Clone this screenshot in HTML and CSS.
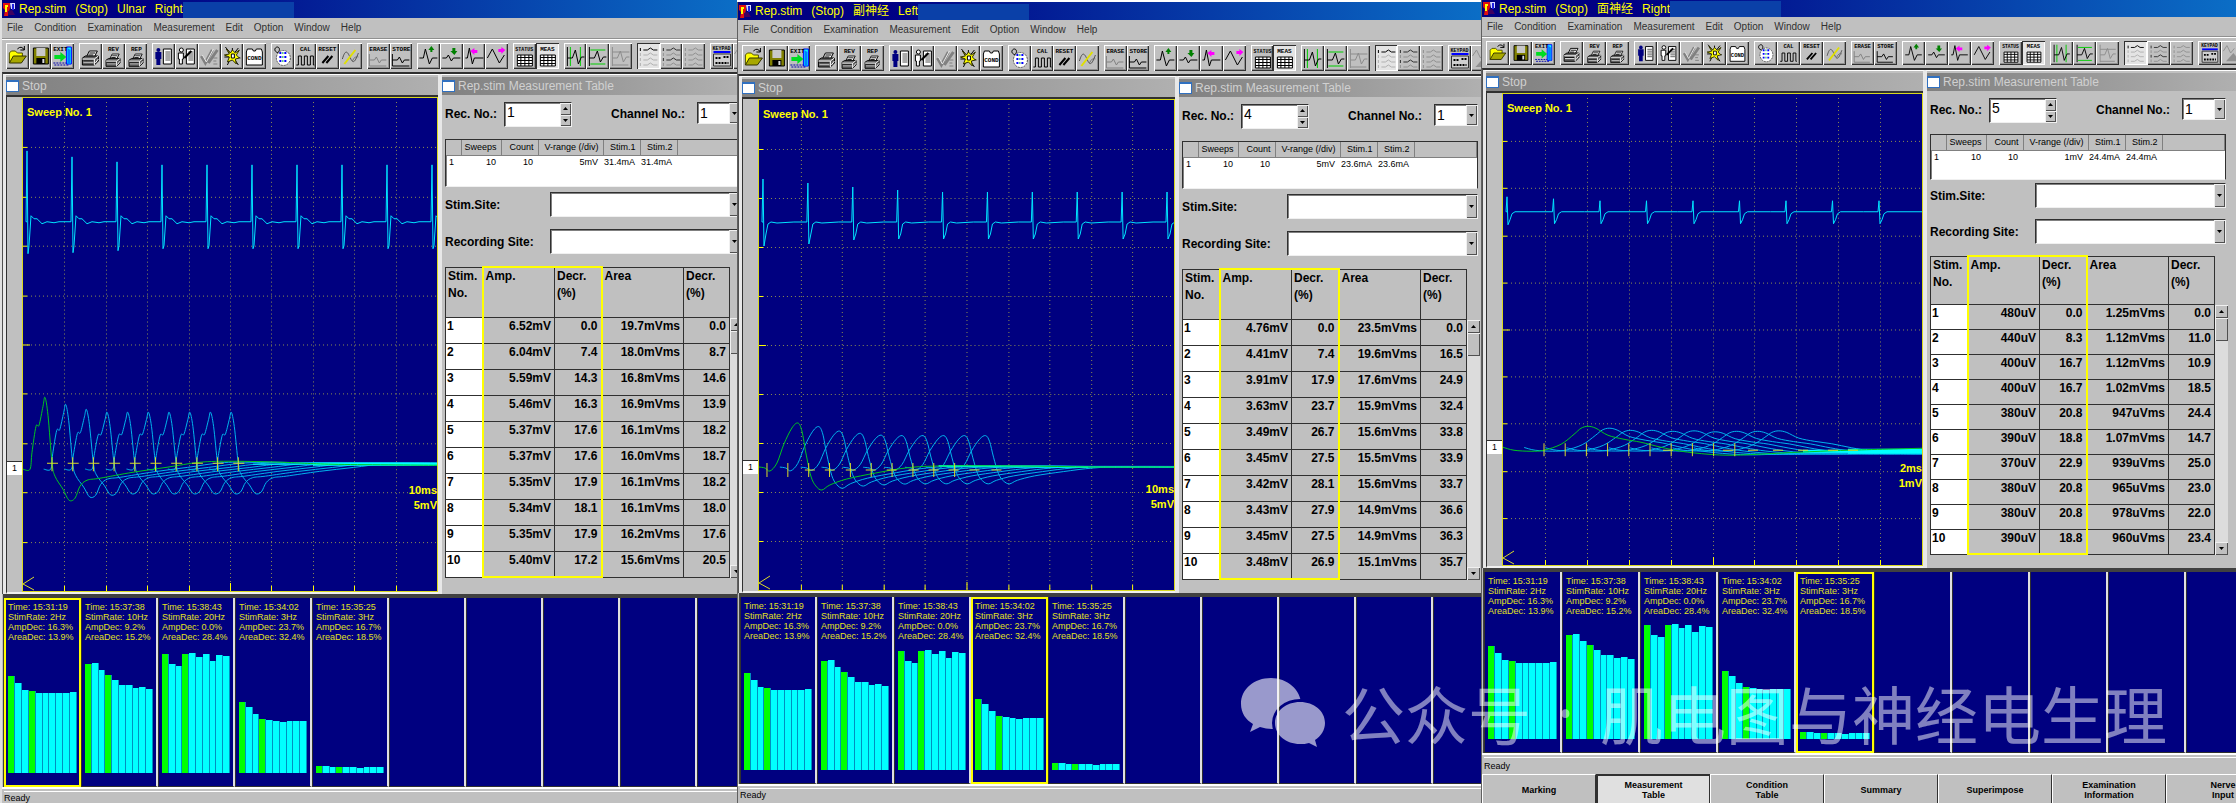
FILE: index.html
```html
<!DOCTYPE html>
<html lang="en">
<head>
    <meta charset="UTF-8">
    <meta name="viewport" content="width=device-width, initial-scale=1.0">
    <title>Rep.stim</title>
    <link rel="stylesheet" href="styles.css">
</head>
<body>
    <main class="screens" id="screens"></main>
    <div class="watermark">
        <svg class="watermark-logo" viewBox="0 0 86 70" aria-hidden="true">
            <mask id="cut">
                <rect width="86" height="70" fill="#fff"/>
                <ellipse cx="60" cy="46" rx="28" ry="24" fill="#000"/>
                <ellipse cx="21" cy="18" rx="4" ry="4"/>
                <ellipse cx="41" cy="18" rx="4" ry="4"/>
            </mask>
            <mask id="eyes">
                <rect width="86" height="70" fill="#fff"/>
                <ellipse cx="51" cy="39" rx="4" ry="4"/>
                <ellipse cx="68" cy="39" rx="4" ry="4"/>
            </mask>
            <path mask="url(#cut)" d="M31 1C14 1 1 12 1 27c0 9 5 16 12 20l-3 8 10-5c4 1 8 2 12 2 16 0 29-11 29-25S47 1 31 1z"/>
            <path mask="url(#eyes)" d="M60 25c-14 0-25 9-25 21s11 21 25 21c3 0 6 0 9-1l8 4-2-7c6-4 10-10 10-17 0-12-11-21-25-21z"/>
        </svg>
        <span>公众号</span><span class="dot">·</span><span>肌电图与神经电生理</span>
    </div>
    <script src="script.js"></script>
</body>
</html>
```
FILE: styles.css
```css
* {
    box-sizing: border-box;
}
body {
    margin: 0;
    background-color: #fff;
    font-family: "Liberation Sans", "Noto Sans CJK SC", Arial, sans-serif;
    font-size: 12px;
    color: #000;
    overflow: hidden;
}
button, input, select {
    font-family: inherit;
    border: none;
    border-radius: 0;
    padding: 0;
    margin: 0;
    color: #000;
}
.screens {
    display: grid;
    grid-template-columns: 737fr 744fr 755fr;
    height: 100vh;
    overflow: hidden;
}
.window {
    --title: 18px;
    --menu: 21px;
    --tools: 33px;
    --plot: 496px;
    --panel: 297px;
    --tail: 27px;
    --pitch: 77px;
    --cards: 189px;
    --row: 26px;
    --head: 50px;
    --gap: 12px;
    --list: 48px;
    --list-gap: 5px;
    min-width: 0;
    overflow: hidden;
    background-color: #c0c0c0;
    border-left: 2px solid #e0e0e0;
}
.window.left {
    --plot: 493px;
    --panel: 304px;
    --tail: 33px;
    --cards: 187px;
    margin-top: 2px;
    border-left: 1px solid #606060;
}
.window.face {
    --title: 17px;
    --menu: 20px;
    --tools: 31px;
    --plot: 474px;
    --panel: 311px;
    --tail: 38px;
    --pitch: 78px;
    --cards: 181px;
    --row: 25px;
    --head: 48px;
    --gap: 11px;
    --list: 46px;
    --list-gap: 3px;
    border-left: 1px solid #606060;
}

/* caption */
.caption {
    display: flex;
    align-items: center;
    height: var(--title);
    gap: 3px;
    padding-left: 1px;
    background: linear-gradient(to right, #000080, #000084 20%, #0b6ec6);
    color: #ff0;
}
.caption h1 {
    display: flex;
    gap: 9px;
    margin: 0;
    font-size: 12px;
    line-height: 16px;
    font-weight: normal;
    white-space: nowrap;
}
.caption svg {
    width: 13px;
    height: 15px;
}
.caption .cover {
    width: 111px;
    align-self: flex-end;
    height: 16px;
    margin-left: -3px;
    background-color: #0a40a8;
}

/* menu */
.menu {
    display: flex;
    align-items: center;
    gap: 11px;
    height: var(--menu);
    padding-left: 5px;
    border-bottom: 1px solid #909090;
}
.menu a {
    color: #303030;
    font-size: 10px;
    line-height: 18px;
    text-decoration: none;
}

/* toolbar */
.toolbar {
    display: flex;
    gap: 5px;
    height: var(--tools);
    padding: 3px 0 3px 4px;
    border-top: 1px solid #fff;
    overflow: hidden;
}
.tools {
    display: flex;
    flex: 1;
    gap: 5px;
}
.tool-group {
    display: flex;
}
.tool-group.tail {
    flex: 0 0 var(--tail);
    overflow: hidden;
}
.tool {
    flex: 1;
    min-width: 0;
    background-color: #c0c0c0;
    box-shadow: inset 1px 1px #fff, inset -1px -1px #303030, inset -2px -2px #909090;
}
.tail .tool {
    flex: 0 0 23px;
}
.tool.pressed {
    background-color: #e4e4e4;
    box-shadow: inset 1px 1px #303030, inset -1px -1px #fff;
}
.tool svg {
    display: block;
    width: 100%;
    height: 100%;
}
.tool text {
    font-family: "Liberation Mono", monospace;
    font-weight: bold;
    font-size: 6px;
    text-anchor: middle;
}
.tool text.long {
    font-size: 5px;
}

/* workspace */
.desk {
    display: flex;
    border-top: 2px solid #303030;
    border-left: 1px solid #505050;
}
.sub {
    padding-top: 2px;
    border-top: 1px solid #fff;
    border-left: 2px solid #e8e8e8;
}
.sub h2 {
    display: flex;
    align-items: center;
    gap: 3px;
    height: 18px;
    margin: 0;
    background: linear-gradient(to right, #808080, #b0b0b0);
    color: #d0d0d0;
    font-size: 12px;
    font-weight: normal;
    white-space: nowrap;
}
.sub h2 i {
    width: 13px;
    height: 12px;
    background-color: #fff;
    border: 1px solid #3070c0;
    border-top-width: 2px;
}
.scope {
    flex: 1;
    min-width: 0;
    border-left-width: 3px;
    border-right: 2px solid #e8e8e8;
}
.scope-body {
    display: flex;
    height: calc(var(--plot) + 3px);
    border-top: 2px solid #303030;
    border-left: 1px solid #303030;
    border-bottom: 2px solid #f0f0f0;
}
.gutter {
    flex: 0 0 15px;
    padding-top: calc(var(--plot) * 0.733);
}
.gutter span {
    display: block;
    height: 14px;
    background-color: #fff;
    border-top: 1px solid #303030;
    font-size: 9px;
    line-height: 13px;
    text-align: center;
}
.plot {
    position: relative;
    flex: 1;
    min-width: 0;
    background-color: #000080;
    border: 1px solid #d8d820;
    color: #ff0;
    font-size: 11px;
    font-weight: bold;
    line-height: 15px;
}
.plot svg {
    display: block;
    width: 100%;
    height: 100%;
}
.plot .sweep {
    position: absolute;
    left: 4px;
    top: 7px;
}
.plot .scale {
    position: absolute;
    right: 0;
    top: 78%;
    text-align: right;
}
.grid {
    stroke: #8c8c50;
    stroke-dasharray: 1 3;
}
.axis {
    stroke: #ff0;
    stroke-width: 1;
}
.line {
    fill: none;
}
.raw {
    stroke: #00e4ff;
}
.rest {
    stroke: #00b4ec;
}
.first {
    stroke: #00c81e;
}
.band {
    stroke: #0ff;
}
.mark {
    stroke: #dcdc28;
}

/* measurement table */
.panel {
    flex: 0 0 var(--panel);
    overflow: hidden;
}
.form {
    width: 299px;
    padding: 7px 0 0 3px;
}
.form-row {
    display: flex;
    align-items: center;
    justify-content: space-between;
    margin-bottom: var(--gap);
    font-weight: bold;
}
.form-row.first-row {
    align-items: flex-start;
}
.form-row .field {
    display: flex;
    gap: 7px;
}
.field label {
    line-height: 24px;
}
.combo, .spin {
    display: flex;
    height: 25px;
    background-color: #fff;
    border: 1px solid #303030;
    border-right-color: #f0f0f0;
    border-bottom-color: #f0f0f0;
    box-shadow: inset 1px 1px #808080;
}
.combo {
    width: 191px;
}
.combo.small {
    width: 44px;
    height: 22px;
    margin-left: 5px;
}
.spin {
    width: 68px;
}
.combo select {
    flex: 1;
    min-width: 0;
    padding-left: 2px;
    appearance: none;
    background: none;
    font-size: 14px;
}
.spin input {
    flex: 1;
    min-width: 0;
    height: 18px;
    padding-left: 2px;
    background: none;
    font-size: 14px;
}
.combo i, .spin button, .scroll button {
    display: flex;
    align-items: center;
    justify-content: center;
    width: 11px;
    background-color: #c0c0c0;
    box-shadow: inset 1px 1px #f0f0f0, inset -1px -1px #505050;
}
.combo svg, .spin svg, .scroll svg {
    width: 5px;
    height: 3px;
}
.spin div {
    display: grid;
    grid-template-rows: 1fr 1fr;
}
.sweeps {
    height: var(--list);
    margin-bottom: var(--list-gap);
    background-color: #fff;
    border: 1px solid #303030;
    border-bottom-color: #f0f0f0;
    box-shadow: inset 1px 1px #808080;
}
.sweeps table {
    width: 100%;
    table-layout: fixed;
    border-collapse: collapse;
    font-size: 9px;
    line-height: 10px;
}
.sweeps th, .sweeps td {
    height: 15px;
    padding: 0 4px 0 0;
    text-align: right;
    font-weight: normal;
    white-space: nowrap;
}
.sweeps td {
    height: 13px;
    padding-right: 5px;
}
.sweeps th {
    background-color: #c0c0c0;
    border-right: 1px solid #808080;
    border-bottom: 1px solid #808080;
}
.sweeps td:first-child {
    padding: 0 0 0 3px;
    text-align: left;
}
.result {
    display: flex;
    align-items: flex-end;
}
.values {
    width: 284px;
    table-layout: fixed;
    border-collapse: collapse;
    font-weight: bold;
}
.values th, .values td {
    padding: 0 3px 0 2px;
    border: 1px solid #303030;
    line-height: 17px;
    text-align: right;
    vertical-align: top;
}
.values thead th {
    height: var(--head);
    text-align: left;
}
.values tbody tr {
    height: var(--row);
}
.values tbody th {
    padding-left: 1px;
    background-color: #fff;
    text-align: left;
}
.values .amp {
    border-left: 2px solid #ff0;
}
.values .decr {
    border-right: 2px solid #ff0;
}
.values thead .amp, .values thead .decr {
    border-top: 2px solid #ff0;
}
.values tbody tr:last-child .amp, .values tbody tr:last-child .decr {
    border-bottom: 2px solid #ff0;
}
.scroll {
    display: flex;
    flex-direction: column;
    width: 13px;
    height: calc(var(--row) * 10);
    background-color: #dcdcdc;
}
.scroll button {
    width: 13px;
    height: 13px;
}
.scroll .thumb {
    height: 23px;
    margin-bottom: auto;
}

/* record strip */
.strip {
    display: flex;
    margin-left: 1px;
    border-top: 4px solid #404040;
    border-left: 1px solid #404040;
    overflow: hidden;
    background-color: #000080;
}
.card {
    display: flex;
    flex: 0 0 var(--pitch);
    flex-direction: column;
    justify-content: space-between;
    height: var(--cards);
    padding: 4px 3px 13px;
    border-left: 1px solid #303030;
    border-right: 2px solid #e0e0e0;
    border-bottom: 1px solid #303030;
    color: #e0e020;
    font-size: 9px;
    line-height: 10px;
    white-space: nowrap;
}
.card.active {
    padding: 2px 2px 12px;
    border: 2px solid #ff0;
}
.card p {
    margin: 0;
}
.bars {
    display: flex;
    align-items: flex-end;
}
.bars i {
    flex: 1;
    background-color: #0ff;
    border-right: 1px solid #0090c0;
}
.bars i:nth-child(1), .bars i:nth-child(4) {
    background-color: #0f0;
}
.status {
    height: 21px;
    padding: 2px 0 0 2px;
    border-top: 2px solid #fff;
    font-size: 9px;
    line-height: 11px;
}
.status p {
    margin: 0;
    padding-top: 1px;
    border-top: 1px solid #fff;
}
.face .status p {
    padding-top: 3px;
}
.tabs {
    display: flex;
}
.tabs button {
    flex: 0 0 114px;
    height: 30px;
    background-color: #c0c0c0;
    border-top: 1px solid #fff;
    border-left: 1px solid #fff;
    border-right: 1px solid #303030;
    font-size: 9px;
    font-weight: bold;
    line-height: 10px;
    white-space: pre-line;
}
.tabs button.active {
    background-color: #e0e0e0;
    border-top: 2px solid #303030;
    border-left: 2px solid #303030;
}

/* channel name over the screens */
.watermark {
    position: absolute;
    left: 1240px;
    top: 666px;
    display: flex;
    align-items: center;
    color: rgba(255, 255, 255, 0.5);
    font-family: "Noto Sans CJK SC", sans-serif;
    font-size: 63px;
    line-height: 92px;
    white-space: nowrap;
    pointer-events: none;
}
.watermark-logo {
    width: 86px;
    height: 70px;
    margin-right: 16px;
    fill: rgba(255, 255, 255, 0.6);
}
.watermark .dot {
    padding: 0 26px;
    font-family: "Noto Sans", sans-serif;
}
```
FILE: script.js
```js
// ---- toolbar icons, drawn on a 22 x 26 button ----
const printer = '<path d="M7 14l3-6h8l-3 6z" fill="#fff" stroke="#000"/><path d="M9 12h5M10 10h6" stroke="#000"/><path d="M3 15l3-2h13v5l-4 4H3z" fill="#606060" stroke="#000"/><path d="M3 16h12v6M4 19h10M15 16l4-3M16 20l3-4" stroke="#fff" fill="none"/><path d="M4 18h10" stroke="#000"/>';
const smallPrinter = `<g transform="translate(1 4) scale(0.88)">${printer}</g>`;
const page = '<path d="M11 6h8v15h-8z" fill="#fff" stroke="#000"/><path d="M13 9h5M13 11h5M13 13h5M13 15h5M13 17h5" stroke="#555"/>';
const gridBox = '<path d="M4 12h15v11H4z" fill="#fff" stroke="#000"/><path d="M4 14.500h15M4 17.500h15M4 20.500h15M7.500 12v11M11.500 12v11M15.500 12v11" stroke="#000"/>';
const label = (text, y = 8) => `<text x="11" y="${y}"${text.length > 5 ? ' class="long"' : ''}>${text}</text>`;
const stroke = (d, color = '#000', width = 1) => `<path d="${d}" fill="none" stroke="${color}" stroke-width="${width}"/>`;
const sheetWaves = (a, b) => [6, 11, 16, 21].map((y, i) =>
    stroke(`M3 ${y - 1}v3M6 ${y + 1}h4l3-2 3 2h4`, i % 2 ? b : a)).join('');

const icons = {
    Open: '<path d="M3 20V10l2-2h4l2 2h5v3" fill="#ff0" stroke="#505000"/><path d="M3 20l4-7h13l-5 7z" fill="#a8a800" stroke="#303000"/>' + stroke('M11 6q4-4 7 1M18 3v4h-4'),
    Save: '<path d="M4 5h15v16H4z" fill="#808000" stroke="#000"/><path d="M7 5h9v8H7z" fill="#c8c8c8"/><path d="M7 15h9v6H7z" fill="#000"/><path d="M13 16h2v4h-2z" fill="#ddd"/>',
    Exit: '<path d="M15 4h5v17h-5z" fill="#0ff" stroke="#00f"/><path d="M16 5l3 2v15l-3-2z" fill="#0080ff"/><path d="M3 12h6V9l6 5-6 5v-3H3z" fill="#0d2"/><path d="M2 20h13M3 22h15" stroke="#00a" stroke-dasharray="2 1"/><text x="9" y="8">EXIT</text>',
    Print: printer,
    'Print review': label('REV') + smallPrinter,
    'Print report': label('REP') + smallPrinter,
    Patient: '<circle cx="6" cy="7" r="2" fill="#000080"/><path d="M3 9h6v7H8v6H4v-6H3z" fill="#000080"/>' + page,
    'Edit patient': '<circle cx="6" cy="7" r="2" fill="#fff" stroke="#000"/><path d="M3 10h5v6H7v5H4v-5H3z" fill="#fff" stroke="#000"/>' + page + stroke('M9 15l7-7', '#000', 2),
    Check: stroke('M3 13l4 7 7-13M10 20l9-13', '#808080', 3) + stroke('M4 12l4 7 7-13', '#e8e8e8') + stroke('M15 15h4M15 18h3M15 21h4', '#808080'),
    Neuron: stroke('M4 4l5 6M17 5l-4 5M3 14h5M19 15l-5-1M6 22l3-6M17 22l-4-6M11 5v4') + '<path d="M5 6l4 4 2-3 3 3 4-3-3 5 3 3-4 1 1 5-4-4-5 2 2-5-5-2 5-1z" fill="#ff0" stroke="#303000"/><path d="M10 11h3v4h-3z" fill="#fff" stroke="#000"/>',
    Conditions: '<path d="M3 9l1-3h5l1 2h2l1-2h5l1 3v13H3z" fill="#fff" stroke="#000"/>' + label('COND', 17),
    Stimulator: stroke('M5 9c-3-2-1-5 1-5s3 3 1 5M5 9l5 3') + '<ellipse cx="12" cy="15" rx="7" ry="7.500" fill="#fff" stroke="#555" stroke-dasharray="2 1"/>' + '<path d="M9 9v12M14 9v12" stroke="#00f" stroke-width="2" stroke-dasharray="2 2"/><path d="M11.500 9v12" stroke="#0a4" stroke-dasharray="2 2"/>',
    Calibrate: label('CAL') + stroke('M2 22h2v-9h3v9h3v-9h3v9h3v-9h3v9h1'),
    Reset: label('RESET') + stroke('M6 20l6-7M10 20l6-7', '#000', 2),
    Filter: stroke('M3 16c3-10 5-8 8-1s5 3 8-5', '#505050') + stroke('M5 21L16 7', '#e0e000', 2) + stroke('M13 18q3-6 6-4', '#707070'),
    Erase: label('ERASE') + stroke('M2 11v12h17M2 17h5l2-3 3 6 2-3h5', '#808080'),
    Store: label('STORE') + stroke('M2 11v12h17M2 17h5l2-3 3 6 2-3h5'),
    'Gain up': stroke('M2 15h4l2-9 4 15 3-6h5') + '<path d="M13 9V7h-2l3-4 3 4h-2v2z" fill="#008000"/>',
    'Gain down': stroke('M2 15h4l2-3 3 6 2-3h7') + '<path d="M12 5h3v3h2l-3 4-4-4h2z" fill="#008000"/>',
    'Sweep faster': stroke('M2 15h2l2-10 3 16 2-6h9') + '<path d="M7 8l4-3v2h3v3h-3v2z" fill="#f0f"/>',
    'Sweep slower': stroke('M2 15l5-9 7 14 5-8') + '<path d="M20 7l-4-3v2h-3v3h3v2z" fill="#f0f"/>',
    Status: label('STATUS') + gridBox,
    Measure: label('MEAS') + gridBox,
    'Latency cursor': stroke('M6 4v19M16 4v19', '#0c0') + stroke('M3 4v19M3 15h5l3-8 3 14 3-7h3'),
    'Amplitude cursor': stroke('M4 7h15M4 21h15', '#0c0') + stroke('M3 4v19M3 15h5l3-7 3 11 3-5h3'),
    'No cursor': stroke('M3 4v19M3 9h17M3 15h5l3-7 3 11 3-5h3M3 22h16', '#8c8c8c'),
    'Channel one': stroke('M3 5v3M6 7h4l3-2 3 2h4') + sheetWaves('#b0b0b0', '#b0b0b0').replace(/^<path[^>]*>/, ''),
    'Channel pairs': sheetWaves('#303030', '#909090'),
    'Channel all': sheetWaves('#909090', '#909090'),
    Keypad: label('KEYPAD', 7) + '<path d="M3 8h17v2H3z" fill="#00f"/><path d="M3 11h17v12H3z" fill="#d0d0d0" stroke="#303030"/><path d="M5 15h6M13 14h5M5 20h13" stroke="#000" stroke-width="2" stroke-dasharray="2 1"/>',
    Trend: stroke('M1 11l4-6 4 8 4-5', '#909090') + '<path d="M4 22l8-9 7 9z" fill="#909090"/>'
};
const groups = [
    ['Open', 'Save', 'Exit'],
    ['Print', 'Print review', 'Print report'],
    ['Patient', 'Edit patient', 'Check', 'Neuron', 'Conditions'],
    ['Stimulator', 'Calibrate', 'Reset', 'Filter'],
    ['Erase', 'Store'],
    ['Gain up', 'Gain down', 'Sweep faster', 'Sweep slower'],
    ['Status', 'Measure'],
    ['Latency cursor', 'Amplitude cursor', 'No cursor'],
    ['Channel one', 'Channel pairs', 'Channel all']
];
const pressed = ['Measure', 'Channel one'];
const menus = ['File', 'Condition', 'Examination', 'Measurement', 'Edit', 'Option', 'Window', 'Help'];

// ---- stored records, shared by all the windows ----
const records = [
    { time: '15:31:19', rate: '2Hz', amp: '16.3%', area: '13.9%', bars: [97, 90, 83, 82, 80, 80, 80, 80, 80, 81] },
    { time: '15:37:38', rate: '10Hz', amp: '9.2%', area: '15.2%', bars: [109, 110, 103, 98, 93, 88, 88, 85, 86, 84] },
    { time: '15:38:43', rate: '20Hz', amp: '0.0%', area: '28.4%', bars: [119, 109, 107, 119, 120, 116, 119, 112, 118, 117] },
    { time: '15:34:02', rate: '3Hz', amp: '23.7%', area: '32.4%', bars: [71, 66, 59, 54, 53, 52, 51, 52, 52, 52] },
    { time: '15:35:25', rate: '3Hz', amp: '16.7%', area: '18.5%', bars: [7, 7, 6, 6, 6, 6, 5, 6, 6, 6] }
];

const windows = [
    {
        cls: 'ulnar', nerve: 'Ulnar', side: 'Right', rec: 1, active: 0, range: '5mV', stim: '31.4mA', time: '10ms', zoom: 1,
        size: [414, 494],
        train: { base: 124, x: 4, step: 45, tops: [53, 59, 64, 67], low: [156, 155, 153, 151], after: [[1, 24], [3, -6], [6, -3], [9, -3], [14, 2], [19, 0], [26, 1], [31, 0]] },
        wave: [[0, 372], [7, 372], [9, 355], [13, 329], [16, 328], [20, 309], [22, 300], [25, 318], [29, 365], [32, 379], [40, 392], [46, 403], [52, 401], [57, 389], [64, 383], [77, 381], [110, 375], [144, 370], [177, 365], [210, 364], [260, 365], [310, 367], [414, 368]],
        base: 371, step: 20.7, scale: [0.9, 0.83, 0.79, 0.79, 0.79, 0.79, 0.79, 0.79, 0.79],
        band: [[230, 367, 300, 367, 1], [290, 367, 414, 367, 3]],
        marks: { x: 29, y: 366, from: 360, to: 374, cross: true },
        rows: ['6.52mV 0.0 19.7mVms 0.0', '6.04mV 7.4 18.0mVms 8.7', '5.59mV 14.3 16.8mVms 14.6', '5.46mV 16.3 16.9mVms 13.9', '5.37mV 17.6 16.1mVms 18.2', '5.37mV 17.6 16.0mVms 18.7', '5.35mV 17.9 16.1mVms 18.2', '5.34mV 18.1 16.1mVms 18.0', '5.35mV 17.9 16.2mVms 17.6', '5.40mV 17.2 15.6mVms 20.5']
    },
    {
        cls: 'left', nerve: '副神经', side: 'Left', rec: 4, active: 3, range: '5mV', stim: '23.6mA', time: '10ms', zoom: 1,
        size: [416, 490],
        train: { base: 122, x: 4, step: 45, tops: [79, 83, 87, 90, 92], low: [146, 144, 140, 139], after: [[2, 12], [4, 2], [7, 0], [13, 1], [30, 0]] },
        wave: [[0, 367], [6, 368], [11, 371], [18, 363], [25, 344], [33, 328], [39, 323], [43, 331], [47, 353], [52, 376], [57, 386], [63, 390], [71, 385], [88, 379], [117, 373], [147, 368], [181, 366], [263, 366], [336, 367], [416, 367]],
        base: 368, step: 20.9, scale: [0.92, 0.82, 0.77, 0.73, 0.72, 0.72, 0.72, 0.72, 0.72],
        band: [[180, 366, 330, 367, 2], [330, 367, 416, 367, 1]],
        marks: { x: 8, y: 370, from: 363, to: 377, lines: [51, 71, 92, 112, 133, 155, 175, 195, 216, 238] },
        rows: ['4.76mV 0.0 23.5mVms 0.0', '4.41mV 7.4 19.6mVms 16.5', '3.91mV 17.9 17.6mVms 24.9', '3.63mV 23.7 15.9mVms 32.4', '3.49mV 26.7 15.6mVms 33.8', '3.45mV 27.5 15.5mVms 33.9', '3.42mV 28.1 15.6mVms 33.7', '3.43mV 27.9 14.9mVms 36.6', '3.45mV 27.5 14.9mVms 36.3', '3.48mV 26.9 15.1mVms 35.7']
    },
    {
        cls: 'face', nerve: '面神经', side: 'Right', rec: 5, active: 4, range: '1mV', stim: '24.4mA', time: '2ms', zoom: 0.955,
        size: [419, 472],
        train: { base: 118, x: 4, step: 46.5, tops: [103, 105, 107], low: [131, 130], after: [[2, 8], [4, 2], [7, 0], [30, 0]] },
        wave: [[0, 354], [11, 357], [28, 358], [41, 357], [58, 351], [71, 341], [78, 335], [85, 333], [93, 335], [105, 342], [121, 346], [138, 349], [158, 354], [178, 358], [205, 361], [228, 362], [255, 361], [295, 359], [345, 357], [419, 355]],
        base: 357, step: 21.2, scale: [0.92, 0.83, 0.83, 0.79, 0.81, 0.77, 0.79, 0.79, 0.81],
        band: [[300, 358, 350, 358, 3], [345, 358, 419, 358, 5]],
        marks: { x: 41, y: 357, from: 350, to: 363, lines: [165, 225, 250, 275, 300, 330, 350] },
        rows: ['480uV 0.0 1.25mVms 0.0', '440uV 8.3 1.12mVms 11.0', '400uV 16.7 1.12mVms 10.9', '400uV 16.7 1.02mVms 18.5', '380uV 20.8 947uVms 24.4', '390uV 18.8 1.07mVms 14.7', '370uV 22.9 939uVms 25.0', '380uV 20.8 965uVms 23.0', '380uV 20.8 978uVms 22.0', '390uV 18.8 960uVms 23.4'],
        tabs: ['Marking', 'Measurement\nTable', 'Condition\nTable', 'Summary', 'Superimpose', 'Examination\nInformation', 'Nerve\nInput']
    }
];

// Curve through the points (Catmull-Rom)
function smooth(p) {
    let d = `M${p[0]}`;
    for (let i = 0; i < p.length - 1; i++) {
        const a = p[i - 1] || p[i], b = p[i], c = p[i + 1], e = p[i + 2] || c;
        d += `C${b[0] + (c[0] - a[0]) / 6} ${b[1] + (c[1] - a[1]) / 6} ${c[0] - (e[0] - b[0]) / 6} ${c[1] - (e[1] - b[1]) / 6} ${c}`;
    }
    return d;
}

const last = (list, i) => list[Math.min(i, list.length - 1)];

function trainPath({ base, x, step, tops, low, after }) {
    let d = `M${x} ${base}`;
    for (let i = 0; i < 10; i++) {
        const x0 = x + i * step;
        d += `L${x0 - 1} ${base}L${x0} ${last(tops, i)}L${x0 + 1} ${last(low, i)}`;
        after.forEach(([dx, dy]) => { d += `L${x0 + 1 + dx} ${base + dy}`; });
    }
    return d;
}

function drawPlot(w) {
    const [wd, ht] = w.size;
    let grid = '', axis = '';
    for (let i = 1; i < 10; i++) {
        const x = Math.round(wd * i / 10) + 0.5, y = Math.round(ht * i / 10) + 0.5;
        grid += `M${x} 4V${ht}M4 ${y}H${wd}`;
        axis += `M${x} ${ht}v${i === 5 ? -8 : -5}M0 ${y}h${i === 5 ? 7 : 4}`;
    }
    const rest = w.scale.map((s, i) => {
        const pts = w.wave.map(([x, y]) => [x + (i + 1) * w.step, w.base + (y - w.base) * s]);
        return `<path class="line rest" d="${smooth(pts)}"/>`;
    }).join('');
    const m = w.marks;
    let marks = '';
    for (let i = 0; i < 10; i++) {
        const x = m.x + i * w.step;
        marks += `M${x} ${m.from}V${m.to}`;
        if (m.cross) marks += `M${x - 5} ${m.y}h11`;
    }
    (m.lines || []).forEach(x => { marks += `M${x - 5} ${m.y}h10`; });
    const band = w.band.map(([x1, y1, x2, y2, width]) =>
        `<path class="line band" stroke-width="${width}" d="M${x1} ${y1}L${x2} ${y2}"/>`).join('');
    return `<svg viewBox="0 0 ${wd} ${ht}" preserveAspectRatio="none" aria-hidden="true">
        <path class="grid" d="${grid}"/><path class="axis" d="${axis}"/>
        <path class="line mark" d="M11 ${ht - 14}L0 ${ht - 7}L11 ${ht - 1}"/>
        <path class="line raw" d="${trainPath(w.train)}"/>
        ${rest}${band}<path class="line first" d="${smooth(w.wave)}"/><path class="line mark" d="${marks}"/></svg>`;
}

const up = '<svg viewBox="0 0 5 3" aria-hidden="true"><path d="M0 3h5L2.500 0z"/></svg>';
const down = '<svg viewBox="0 0 5 3" aria-hidden="true"><path d="M0 0h5L2.500 3z"/></svg>';

const tool = name => `<button class="tool${pressed.includes(name) ? ' pressed' : ''}" aria-label="${name}"><svg viewBox="0 0 22 26">${icons[name]}</svg></button>`;

function drawCard(record, active, zoom) {
    if (!record) return '<div class="card"></div>';
    const bars = record.bars.map(h => `<i style="height: ${Math.round(h * zoom)}px"></i>`).join('');
    return `<div class="card${active ? ' active' : ''}">
        <div><p>Time: ${record.time}</p><p>StimRate: ${record.rate}</p><p>AmpDec: ${record.amp}</p><p>AreaDec: ${record.area}</p></div>
        <div class="bars">${bars}</div></div>`;
}

function drawRow(text, i) {
    const [amp, decr, area, areaDecr] = text.split(' ');
    return `<tr><th scope="row">${i + 1}</th><td class="amp">${amp}</td><td class="decr">${decr}</td><td>${area}</td><td>${areaDecr}</td></tr>`;
}

function drawWindow(w) {
    const id = w.cls;
    const cards = Array.from({ length: 10 }, (_, i) => drawCard(records[i], i === w.active, w.zoom)).join('');
    const tabs = w.tabs ? `<nav class="tabs">${w.tabs.map((t, i) => `<button${i === 1 ? ' class="active"' : ''}>${t}</button>`).join('')}</nav>` : '';
    return `<section class="window ${id}">
        <header class="caption">
            <svg viewBox="0 0 13 15" aria-hidden="true"><path d="M0 1h7v5l-2 8H1l1-6-2-2z" fill="#e01010"/><path d="M2 3h3v2H4v5H2z" fill="#ff0"/><path d="M7 1h5v6H8z" fill="#d8d8ff"/><path d="M9 2h2v6H9z" fill="#2020e0"/><path d="M5 9l4-1 3 5H5z" fill="#400060"/></svg>
            <h1><span>Rep.stim</span><span>(Stop)</span><span>${w.nerve}</span><span>${w.side}</span></h1>
            <span class="cover"></span>
        </header>
        <nav class="menu">${menus.map(m => `<a href="#">${m}</a>`).join('')}</nav>
        <div class="toolbar">
            <div class="tools">${groups.map(g => `<div class="tool-group" style="flex: ${g.length}">${g.map(tool).join('')}</div>`).join('')}</div>
            <div class="tool-group tail">${tool('Keypad')}${tool('Trend')}</div>
        </div>
        <div class="desk">
            <section class="sub scope">
                <h2><i></i>Stop</h2>
                <div class="scope-body">
                    <div class="gutter"><span>1</span></div>
                    <div class="plot">${drawPlot(w)}
                        <div class="sweep">Sweep No. 1</div>
                        <div class="scale">${w.time}<br>${w.range}</div>
                    </div>
                </div>
            </section>
            <section class="sub panel">
                <h2><i></i>Rep.stim Measurement Table</h2>
                <div class="form">
                    <div class="form-row first-row">
                        <div class="field"><label for="rec-${id}">Rec. No.:</label>
                            <div class="spin"><input id="rec-${id}" type="text" value="${w.rec}"><div><button aria-label="Next record">${up}</button><button aria-label="Previous record">${down}</button></div></div></div>
                        <div class="field"><label for="ch-${id}">Channel No.:</label>
                            <div class="combo small"><select id="ch-${id}"><option>1</option></select><i>${down}</i></div></div>
                    </div>
                    <div class="sweeps"><table>
                        <colgroup><col width="15"><col width="40"><col width="37"><col width="65"><col width="37"><col width="37"><col></colgroup>
                        <thead><tr><th></th><th>Sweeps</th><th>Count</th><th>V-range (/div)</th><th>Stim.1</th><th>Stim.2</th><th></th></tr></thead>
                        <tbody><tr><td>1</td><td>10</td><td>10</td><td>${w.range}</td><td>${w.stim}</td><td>${w.stim}</td><td></td></tr></tbody>
                    </table></div>
                    <div class="form-row"><label for="stim-${id}">Stim.Site:</label>
                        <div class="combo"><select id="stim-${id}"><option></option></select><i>${down}</i></div></div>
                    <div class="form-row"><label for="site-${id}">Recording Site:</label>
                        <div class="combo"><select id="site-${id}"><option></option></select><i>${down}</i></div></div>
                    <div class="result">
                        <table class="values">
                            <colgroup><col width="37"><col width="72"><col width="47"><col width="82"><col width="46"></colgroup>
                            <thead><tr><th>Stim. No.</th><th class="amp">Amp.</th><th class="decr">Decr. (%)</th><th>Area</th><th>Decr. (%)</th></tr></thead>
                            <tbody>${w.rows.map(drawRow).join('')}</tbody>
                        </table>
                        <div class="scroll"><button aria-label="Scroll up">${up}</button><button class="thumb" aria-label="Scroll position"></button><button aria-label="Scroll down">${down}</button></div>
                    </div>
                </div>
            </section>
        </div>
        <div class="strip">${cards}</div>
        <footer class="status"><p>Ready</p></footer>
        ${tabs}
    </section>`;
}

document.getElementById('screens').innerHTML = windows.map(drawWindow).join('');
```
